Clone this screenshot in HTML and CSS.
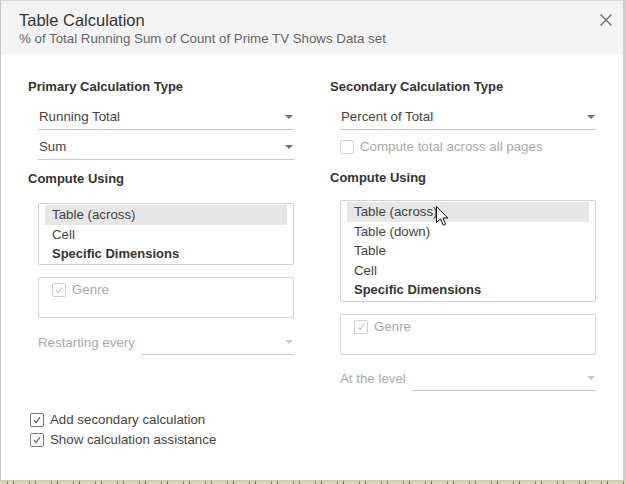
FILE: index.html
```html
<!DOCTYPE html>
<html>
<head>
<meta charset="utf-8">
<link rel="stylesheet" href="styles.css">
</head>
<body>
<div class="screen">
  <div class="dialog">
    <header class="dlg-head">
      <div class="head-text">
        <div class="title">Table Calculation</div>
        <div class="subtitle">% of Total Running Sum of Count of Prime TV Shows Data set</div>
      </div>
      <button class="close" aria-label="Close">
        <svg width="12" height="12" viewBox="0 0 12 12"><path d="M0.5 0.5 L11.5 11.5 M11.5 0.5 L0.5 11.5" stroke="#6a6a6a" stroke-width="1.3" fill="none"/></svg>
      </button>
    </header>
    <div class="dlg-body">
      <div class="cols">
        <section class="col col-left">
          <h3 class="heading">Primary Calculation Type</h3>
          <div class="select first"><span>Running Total</span><i class="arrow"></i></div>
          <div class="select second"><span>Sum</span><i class="arrow"></i></div>
          <h3 class="heading compute">Compute Using</h3>
          <div class="listbox">
            <div class="item selected">Table (across)</div>
            <div class="item">Cell</div>
            <div class="item bold">Specific Dimensions</div>
          </div>
          <div class="dims">
            <label class="dim"><span class="cb disabled"><svg viewBox="0 0 14 14"><path d="M3.5 7.2 L6 10 L10.5 3.8" stroke="#c4c4c4" stroke-width="1.3" fill="none"/></svg></span><span>Genre</span></label>
          </div>
          <div class="field-row restart"><span class="field-label">Restarting every</span><div class="select inline"><span></span><i class="arrow light"></i></div></div>
        </section>
        <section class="col col-right">
          <h3 class="heading">Secondary Calculation Type</h3>
          <div class="select first"><span>Percent of Total</span><i class="arrow"></i></div>
          <label class="check-row disabled-row"><span class="cb disabled"></span><span>Compute total across all pages</span></label>
          <h3 class="heading compute2">Compute Using</h3>
          <div class="listbox tall">
            <div class="item selected">Table (across)</div>
            <div class="item">Table (down)</div>
            <div class="item">Table</div>
            <div class="item">Cell</div>
            <div class="item bold">Specific Dimensions</div>
          </div>
          <div class="dims">
            <label class="dim"><span class="cb disabled"><svg viewBox="0 0 14 14"><path d="M3.5 7.2 L6 10 L10.5 3.8" stroke="#c4c4c4" stroke-width="1.3" fill="none"/></svg></span><span>Genre</span></label>
          </div>
          <div class="field-row level"><span class="field-label">At the level</span><div class="select inline"><span></span><i class="arrow light"></i></div></div>
        </section>
      </div>
      <div class="options">
        <label class="check-row opt"><span class="cb"><svg viewBox="0 0 14 14"><path d="M3.5 7.2 L6 10 L10.5 3.8" stroke="#555" stroke-width="1.4" fill="none"/></svg></span><span>Add secondary calculation</span></label>
        <label class="check-row opt"><span class="cb"><svg viewBox="0 0 14 14"><path d="M3.5 7.2 L6 10 L10.5 3.8" stroke="#555" stroke-width="1.4" fill="none"/></svg></span><span>Show calculation assistance</span></label>
      </div>
    </div>
  </div>
  <div class="underlay"></div>
</div>
<svg class="cursor" width="13" height="21" viewBox="0 0 13 21"><path d="M0.5 0.5 L0.5 16.5 L4.5 12.8 L7.3 19.3 L9.6 18.3 L6.9 12 L11.8 12 Z" fill="#fff" stroke="#111" stroke-width="1" stroke-linejoin="miter"/></svg>
</body>
</html>
```
FILE: styles.css
```css
* { box-sizing: border-box; }
html, body { margin: 0; padding: 0; }
body {
  width: 626px;
  height: 484px;
  overflow: hidden;
  background: #cfcfcf;
  font-family: "Liberation Sans", Arial, sans-serif;
  font-size: 13.3px;
  color: #333;
  position: relative;
}
.screen { display: flex; flex-direction: column; }
.dialog {
  width: 623px;
  height: 481px;
  background: #fff;
  border-left: 1px solid #c8c8c8;
  border-top: 1px solid #d6d6d6;
  border-bottom: 1px solid #c8c8c8;
  display: flex;
  flex-direction: column;
}
.underlay {
  height: 3px;
  width: 626px;
  background: repeating-linear-gradient(90deg, #d9d6ad 0 7px, #8a866a 7px 8px, #d9d6ad 8px 13px, #6e6c5a 13px 14px, #d9d6ad 14px 22px);
}
.dlg-head {
  height: 53px;
  background: #f3f3f3;
  display: flex;
  justify-content: space-between;
  padding: 9px 11px 0 18px;
  flex: none;
}
.title { font-size: 16.5px; line-height: 20px; color: #333; }
.subtitle { font-size: 13.3px; line-height: 16px; color: #666; margin-top: 1px; }
.close {
  border: 0; background: none; padding: 0;
  width: 12px; height: 12px;
  margin-top: 4px; margin-right: 0;
}
.close svg { display: block; }
.dlg-body { padding: 25px 0 0 27px; }
.cols { display: flex; gap: 36px; }
.col { width: 266px; display: flex; flex-direction: column; }
.heading { margin: 0; font-size: 13px; font-weight: bold; line-height: 16px; color: #333; }
.select {
  margin-left: 10px;
  height: 26px;
  border-bottom: 1px solid #c8c8c8;
  display: flex;
  align-items: center;
  justify-content: space-between;
  padding: 0 1px 0 1px;
  color: #444;
}
.select.first { margin-top: 9px; }
.select.second { margin-top: 4px; }
.arrow {
  width: 0; height: 0;
  border-left: 4px solid transparent;
  border-right: 4px solid transparent;
  border-top: 4px solid #6f6f6f;
  margin-right: 0px;
}
.arrow.light { border-top-color: #c9c9c9; }
.heading.compute { margin-top: 11px; }
.heading.compute2 { margin-top: 15px; }
.listbox {
  margin-left: 10px;
  margin-top: 16px;
  border: 1px solid #cfcfcf;
  border-radius: 2px;
  padding: 1px 6px 1px;
  height: 62px;
}
.listbox.tall { margin-top: 14px; height: 102px; }
.item { height: 19.6px; line-height: 19.6px; padding-left: 7px; color: #444; }
.item.selected { background: #e6e6e6; }
.item.bold { font-weight: bold; font-size: 13px; color: #333; }
.dims {
  margin-left: 10px;
  margin-top: 12px;
  height: 41px;
  border: 1px solid #d4d4d4;
  border-radius: 2px;
  padding: 4px 0 0 13px;
}
.dim { display: flex; align-items: center; gap: 6px; color: #a8a8a8; line-height: 16px; }
.cb {
  width: 14px; height: 14px;
  border: 1px solid #7a7a7a;
  border-radius: 2px;
  background: #fff;
  display: inline-block;
  flex: none;
}
.cb svg { display: block; width: 12px; height: 12px; }
.cb.disabled { border-color: #cfcfcf; }
.field-row {
  margin-left: 10px;
  margin-top: 12px;
  display: flex;
  align-items: flex-end;
  height: 25px;
}
.field-row.level { margin-top: 11px; }
.field-label { color: #a9a9a9; line-height: 25px; height: 25px; padding-bottom: 1px; margin-right: 6px; }
.select.inline { margin-left: 0; flex: 1; height: 25px; }
.check-row { display: flex; align-items: center; gap: 6px; line-height: 16px; }
.disabled-row { margin-left: 10px; margin-top: 9px; color: #a9a9a9; }
.options { margin-top: 19px; padding-left: 2px; display: flex; flex-direction: column; }
.check-row.opt { height: 20px; color: #444; gap: 6px; }
.cursor { position: absolute; left: 436px; top: 206px; }
```
